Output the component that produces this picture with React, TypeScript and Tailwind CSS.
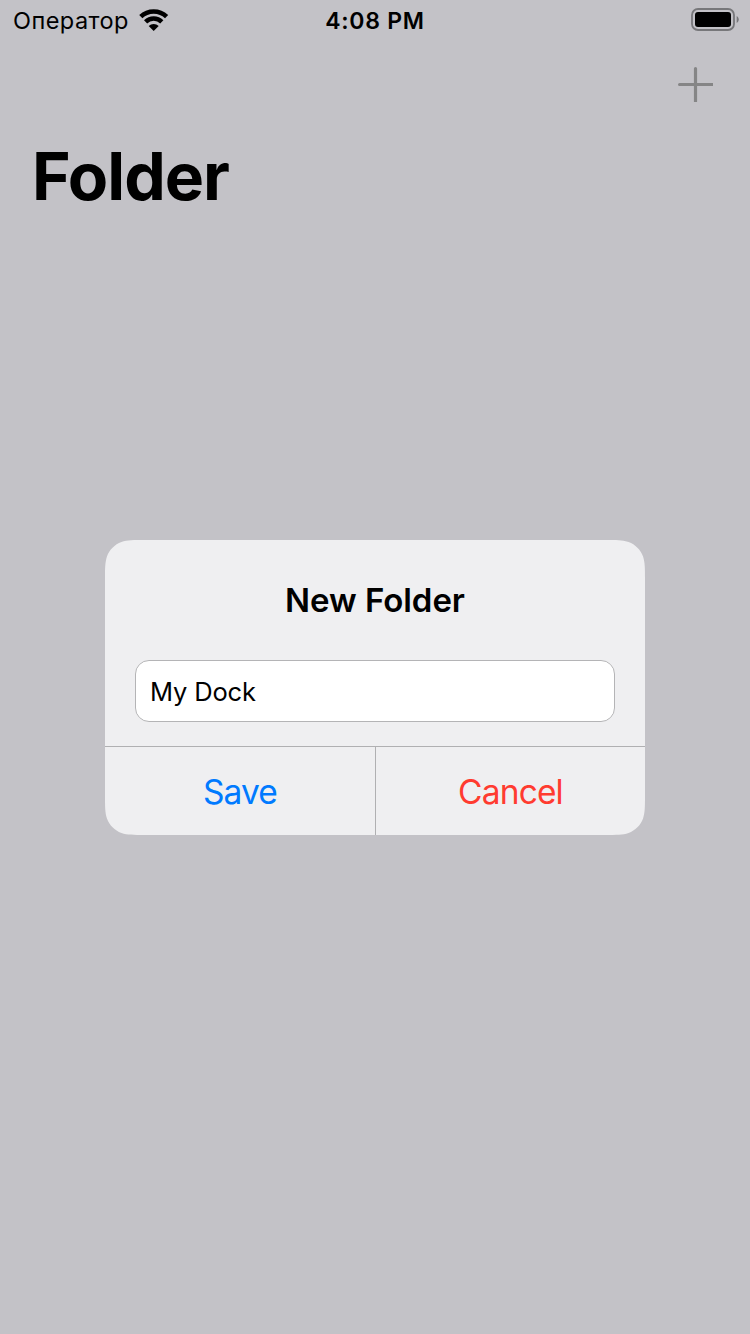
export default function App() {
  return (
    <div className="flex h-[1334px] w-[750px] flex-col bg-[#c3c2c7] font-['Inter',sans-serif] text-black">
      <header className="grid h-10 grid-cols-3 items-center pl-[13px] pr-[11px]">
        <div className="flex items-center gap-[10px]">
          <span className="pt-[2px] text-[23.5px] leading-[30px] tracking-[0.45px]">Оператор</span>
          <svg className="h-[22px] w-[30px]" viewBox="0 0 30 22" fill="none" stroke="black" strokeWidth="4.5">
            <path d="M1.8 7.7a18.4 18.4 0 0 1 25.8 0" />
            <path d="M6.6 12.9a11.5 11.5 0 0 1 16.2 0" />
            <path d="M14.7 22l-5-5a7.2 7.2 0 0 1 10 0z" fill="black" stroke="none" />
          </svg>
        </div>
        <span className="pr-[2px] pt-[2px] text-center text-[23px] font-semibold leading-[30px] tracking-[0.75px]">4:08 PM</span>
        <svg className="mb-[2px] h-[23px] w-[48px] justify-self-end" viewBox="0 0 48 23">
          <rect x="1" y="1" width="42" height="21" rx="6" fill="none" stroke="#77777a" strokeWidth="1.8" />
          <rect x="4" y="4" width="36" height="15" rx="3" />
          <path d="M45.7 8c2.7 1.5 2.7 5.5 0 7z" fill="#77777a" />
        </svg>
      </header>
      <div className="flex h-[88px] items-center justify-end pr-[37px]">
        <svg className="h-9 w-9" viewBox="0 0 36 36" stroke="#858586" strokeWidth="3.2" strokeLinecap="round">
          <path d="M18.5 2.6v32.8M2.6 18.5h32.8" />
        </svg>
      </div>
      <h1 className="ml-8 mt-[8px] text-[66px] font-bold leading-[80px] tracking-[-1px]">Folder</h1>
      <section className="ml-[105px] mt-[324px] flex h-[295px] w-[540px] flex-col bg-[#efeff1] [clip-path:path('M39.75_0H500.25C511.7_0_517.42_0_522.58_1.7L523.58_1.95C530.31_4.4_535.6_9.69_538.05_16.42C540_22.58_540_28.3_540_39.75V255.25C540_266.7_540_272.42_538.05_278.58C535.6_285.31_530.31_290.6_523.58_293.05C517.42_295_511.7_295_500.25_295H39.75C28.3_295_22.58_295_16.42_293.05C9.69_290.6_4.4_285.31_1.95_278.58C0_272.42_0_266.7_0_255.25V39.75C0_28.3_0_22.58_1.95_16.42C4.4_9.69_9.69_4.4_16.42_1.95C22.58_0_28.3_0_39.75_0Z')]">
        <div className="flex h-[206px] flex-col items-center pt-[38px]">
          <h2 className="text-[33px] font-semibold leading-[44px] tracking-[-0.05px]">New Folder</h2>
          <input aria-label="Folder name" className="mt-[38px] h-[62px] w-[480px] rounded-[14px] border border-[#b4b4b6] bg-white px-[14px] text-[25.5px] tracking-[-0.15px]" defaultValue="My Dock" />
        </div>
        <div className="flex flex-1 border-t border-[#b0b0b2] text-[33.5px] tracking-[-0.85px]">
          <button className="w-[271px] border-r border-[#b0b0b2] pt-[2px] text-[#007aff]">Save</button>
          <button className="flex-1 pt-[2px] text-[#ff3b30]">Cancel</button>
        </div>
      </section>
    </div>
  );
}
